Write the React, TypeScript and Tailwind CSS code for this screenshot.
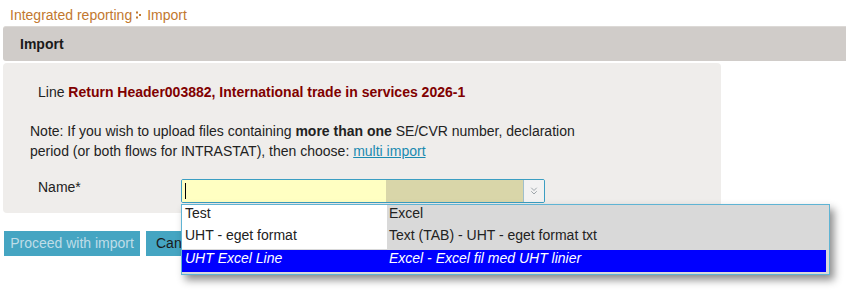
import { ChevronsDown } from "lucide-react";

const rows = [
  { name: "Test", type: "Excel", active: false },
  { name: "UHT - eget format", type: "Text (TAB) - UHT - eget format txt", active: false },
  { name: "UHT Excel Line", type: "Excel - Excel fil med UHT linier", active: true },
];

function Crumb() {
  return (
    <svg width="7" height="8" viewBox="0 0 7 8" className="mx-[4px] inline-block">
      <rect x="0" y="0.5" width="2" height="2" fill="#c2782f" />
      <rect x="3" y="3" width="2" height="2" fill="#c2782f" />
      <rect x="0" y="5.5" width="2" height="2" fill="#c2782f" />
    </svg>
  );
}

export default function App() {
  return (
    <div className="relative w-[846px] h-[295px] overflow-hidden bg-white text-[14px] text-[#222] font-['Liberation_Sans',Arial,sans-serif]">
      <div className="h-[26px] pl-[10px] pt-[4px] leading-[18px] text-[#c2782f] flex items-center">
        <span>Integrated reporting</span>
        <Crumb />
        <span>Import</span>
      </div>

      <div className="ml-[3px] h-[35px] bg-[#d0ccc9] rounded-l-[3px] border-t border-[#dcd9d6] pl-[17px] flex items-center font-bold text-[#1a1a1a]">
        Import
      </div>

      <div className="ml-[3px] mt-[2px] w-[718px] h-[150px] bg-[#efedeb] rounded-[4px] pt-[19px]">
        <div className="pl-[35px] leading-[20px]">
          Line{" "}
          <span className="font-bold text-[#800000]">
            Return Header003882, International trade in services 2026-1
          </span>
        </div>
        <div className="pl-[27px] mt-[19px] leading-[20px] w-[605px]">
          Note: If you wish to upload files containing <b>more than one</b> SE/CVR number, declaration
          period (or both flows for INTRASTAT), then choose:{" "}
          <a className="text-[#1a8ab0] underline">multi import</a>
        </div>
        <div className="mt-[18px] flex items-start">
          <div className="pl-[35px] w-[178px] leading-[16px]">Name*</div>
          <div className="w-[364px] h-[24px] border border-[#3b9ec2] rounded-[2px] flex overflow-hidden">
            <div className="w-[204px] bg-[#ffffc2] flex items-center pl-[3px]">
              <div className="w-[1px] h-[16px] bg-black" />
            </div>
            <div className="w-[137px] bg-[#d9d6a9]" />
            <div className="flex-1 bg-[#f2f2f2] border-l border-[#9fbfcc] flex items-center justify-center">
              <ChevronsDown size={12} strokeWidth={1.25} color="#6b7880" />
            </div>
          </div>
        </div>
      </div>

      <div className="mt-[18px] ml-[4px] flex gap-[6px]">
        <button className="h-[25px] w-[136px] bg-[#45a5c2] text-[#bfdde8]">Proceed with import</button>
        <button className="h-[25px] px-[10px] bg-[#45a5c2] text-[#1a1a1a]">Cancel</button>
      </div>

      <div className="absolute left-[181px] top-[204px] w-[649px] border border-[#5fb4d4] bg-[#d9d9d9] pb-[2px] shadow-[4px_5px_8px_rgba(0,0,0,0.45)]">
        {rows.map((r) => (
          <div
            key={r.name}
            className={
              r.active
                ? "flex h-[22px] items-start leading-[17px] bg-[#0000ff] text-white italic mt-[1px] mr-[3px]"
                : "flex h-[22px] items-start leading-[17px]"
            }
          >
            <div className={r.active ? "w-[205px] pl-[3px]" : "w-[205px] pl-[3px] h-full bg-white"}>
              {r.name}
            </div>
            <div className="pl-[2px]">{r.type}</div>
          </div>
        ))}
      </div>
    </div>
  );
}
